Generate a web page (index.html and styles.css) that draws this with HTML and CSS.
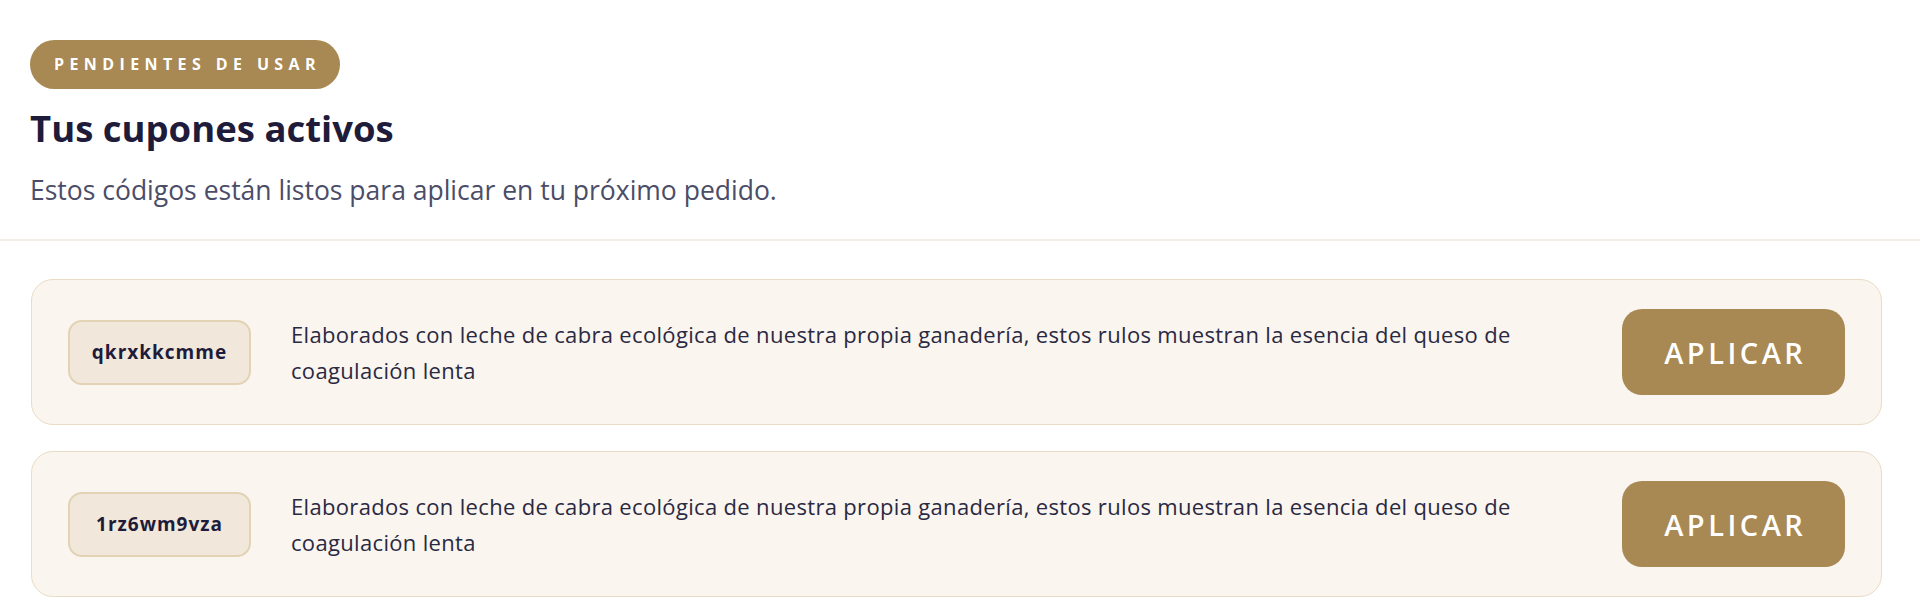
FILE: index.html
```html
<!DOCTYPE html>
<html lang="es">
<head>
<meta charset="utf-8">
<title>Tus cupones activos</title>
<link rel="stylesheet" href="styles.css">
</head>
<body>
<main class="panel">
  <header class="panel-head">
    <span class="badge">PENDIENTES DE USAR</span>
    <h1 class="title">Tus cupones activos</h1>
    <p class="subtitle">Estos códigos están listos para aplicar en tu próximo pedido.</p>
  </header>
  <section class="coupons">
    <article class="coupon">
      <span class="code">qkrxkkcmme</span>
      <p class="desc">Elaborados con leche de cabra ecológica de nuestra propia ganadería, estos rulos muestran la esencia del queso de coagulación lenta</p>
      <button class="apply" type="button">APLICAR</button>
    </article>
    <article class="coupon">
      <span class="code">1rz6wm9vza</span>
      <p class="desc">Elaborados con leche de cabra ecológica de nuestra propia ganadería, estos rulos muestran la esencia del queso de coagulación lenta</p>
      <button class="apply" type="button">APLICAR</button>
    </article>
  </section>
</main>
</body>
</html>
```
FILE: styles.css
```css
* { box-sizing: border-box; }
html, body { margin: 0; padding: 0; background: #ffffff; }
body {
  font-family: "Open Sans", "Noto Sans", "Liberation Sans", sans-serif;
  color: #1e1c3a;
}
.panel-head {
  padding: 40px 30px 32px 30px;
  border-bottom: 2px solid #f2ede6;
}
.badge {
  display: inline-block;
  background: #a88853;
  color: #ffffff;
  font-weight: 700;
  font-size: 16px;
  line-height: 25px;
  letter-spacing: 5.4px;
  padding: 12px 18.6px 12px 24px;
  border-radius: 25px;
}
.title {
  margin: 18px 0 0 0;
  font-size: 36.5px;
  line-height: 43px;
  font-weight: 700;
  color: #1e1c3a;
}
.subtitle {
  margin: 24px 0 0 0;
  font-size: 26.5px;
  line-height: 33px;
  color: #4b4d68;
}
.coupons {
  display: flex;
  flex-direction: column;
  gap: 26px;
  padding: 38px 38px 20px 31px;
}
.coupon {
  display: flex;
  align-items: center;
  gap: 40px;
  padding: 29px 36px;
  background: #faf5ef;
  border: 1px solid #eadcc5;
  border-radius: 22px;
}
.code {
  flex: none;
  width: 183px;
  height: 65px;
  display: flex;
  align-items: center;
  justify-content: center;
  background: #f1e7db;
  border: 2px solid #e3d3b5;
  border-radius: 14px;
  font-weight: 700;
  font-size: 19px;
  letter-spacing: 1px;
  color: #1e1c3a;
}
.desc {
  flex: 1;
  margin: 0;
  font-size: 22px;
  letter-spacing: 0.33px;
  line-height: 36px;
  color: #2a2942;
}
.apply {
  flex: none;
  width: 223px;
  height: 86px;
  padding: 0 0 0 3.5px;
  border: none;
  border-radius: 20px;
  background: #a88853;
  color: #ffffff;
  font-family: inherit;
  font-weight: 600;
  font-size: 29px;
  letter-spacing: 3.5px;
  cursor: pointer;
}
```
